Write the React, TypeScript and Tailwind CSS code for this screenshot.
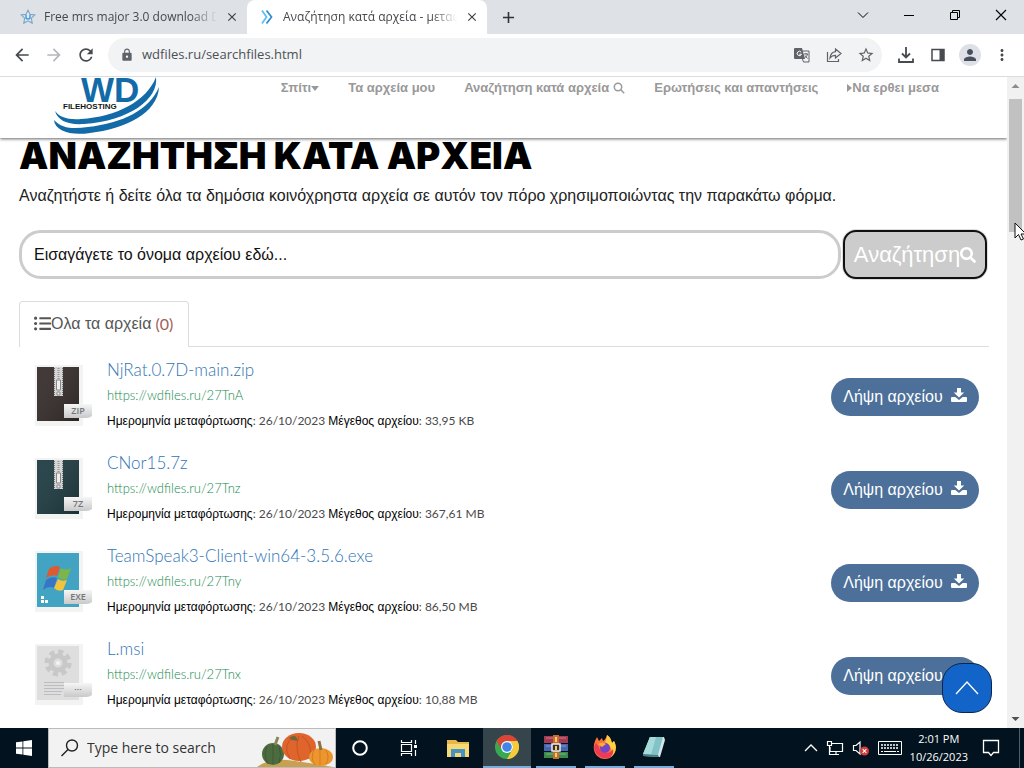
import React from "react";
import {
  MdArrowBack,
  MdArrowForward,
  MdClose,
  MdAdd,
  MdLock,
  MdMoreVert,
  MdPerson,
  MdRefresh,
  MdStarBorder,
} from "react-icons/md";
import { FaSearch, FaListUl } from "react-icons/fa";

type FileKind = "zip" | "7z" | "exe" | "msi";

interface SharedFile {
  name: string;
  url: string;
  size: string;
  kind: FileKind;
}

const files: SharedFile[] = [
  { name: "NjRat.0.7D-main.zip", url: "https://wdfiles.ru/27TnA", size: "33,95 KB", kind: "zip" },
  { name: "CNor15.7z", url: "https://wdfiles.ru/27Tnz", size: "367,61 MB", kind: "7z" },
  { name: "TeamSpeak3-Client-win64-3.5.6.exe", url: "https://wdfiles.ru/27Tny", size: "86,50 MB", kind: "exe" },
  { name: "L.msi", url: "https://wdfiles.ru/27Tnx", size: "10,88 MB", kind: "msi" },
];

function StarFavicon() {
  return (
    <svg viewBox="0 0 16 16" className="size-4 shrink-0">
      <path d="M8 1.2 10 5.4l4.8.5-3.5 3.3.9 4.9L8 11.8l-4.2 2.3.9-4.9L1.2 5.9 6 5.4Z" fill="#dcecf8" stroke="#7fa3c0" strokeWidth="1.1" />
      <path d="M6 6v2.6c0 2 4 2 4 0V6" fill="none" stroke="#4b9bd6" strokeWidth="1.5" />
    </svg>
  );
}

function ChevronsFavicon() {
  return (
    <svg viewBox="0 0 16 16" className="size-4 shrink-0" fill="none" strokeWidth="1.8">
      <path d="m3 1.5 4.5 6.500L3 14.500" stroke="#5cc0f0" />
      <path d="m7.500 1.500 5 6.500-5 6.500" stroke="#2f8fd8" />
    </svg>
  );
}

function TabStrip() {
  return (
    <div className="flex h-[34px] items-stretch bg-[#dee1e6] text-xs text-[#45484c]">
      <div className="flex w-[247px] shrink-0 items-center gap-2 pl-5 pr-2">
        <StarFavicon />
        <span className="flex-1 overflow-hidden whitespace-nowrap [mask-image:linear-gradient(to_right,black_85%,transparent)]">
          Free mrs major 3.0 download Download
        </span>
        <button aria-label="Close tab" className="text-[#3c4043]"><MdClose size={14} /></button>
      </div>
      <div className="flex w-[240px] shrink-0 items-center gap-2 rounded-t-lg bg-white pl-3 pr-2">
        <ChevronsFavicon />
        <span className="flex-1 overflow-hidden whitespace-nowrap [mask-image:linear-gradient(to_right,black_85%,transparent)]">
          Αναζήτηση κατά αρχεία - μεταφόρτωση
        </span>
        <button aria-label="Close tab" className="text-[#3c4043]"><MdClose size={14} /></button>
      </div>
      <button aria-label="New tab" className="px-3 text-[#2f3236]"><MdAdd size={19} /></button>
      <div className="ml-auto flex items-center pb-1 text-black">
        <button aria-label="Search tabs" className="flex w-[46px] justify-center">
          <svg viewBox="0 0 12 12" className="size-3" fill="none" stroke="currentColor"><path d="m1 3.500 5 5 5-5" /></svg>
        </button>
        <button aria-label="Minimize" className="flex w-[46px] justify-center">
          <svg viewBox="0 0 12 12" className="size-3" fill="none" stroke="currentColor"><path d="M1 6.500h10" /></svg>
        </button>
        <button aria-label="Restore" className="flex w-[46px] justify-center">
          <svg viewBox="0 0 12 12" className="size-3" fill="none" stroke="currentColor"><path d="M1.500 3.500h7v7h-7zM3.500 3.500v-2h7v7h-2" /></svg>
        </button>
        <button aria-label="Close" className="flex w-[46px] justify-center">
          <svg viewBox="0 0 12 12" className="size-3" fill="none" stroke="currentColor" strokeWidth="1.1"><path d="m1 1 10 10M11 1 1 11" /></svg>
        </button>
      </div>
    </div>
  );
}

function Toolbar() {
  return (
    <div className="flex h-[43px] items-center border-b border-[#dadce0] bg-white pl-3 pr-[6px] text-[#5f6368]">
      <div className="flex items-center gap-3">
        <button aria-label="Back" className="text-[#474a4e]"><MdArrowBack size={20} /></button>
        <button aria-label="Forward" className="text-[#b5b7ba]"><MdArrowForward size={20} /></button>
        <button aria-label="Reload" className="text-[#474a4e]"><MdRefresh size={20} /></button>
      </div>
      <div className="ml-3 flex h-[34px] flex-1 items-center rounded-full bg-[#f1f3f4] pl-3">
        <MdLock size={14} />
        <input
          aria-label="Address"
          className="ml-2 min-w-0 flex-1 bg-transparent text-[13px] text-[#4d5156] outline-none"
          defaultValue="wdfiles.ru/searchfiles.html"
        />
        <div className="flex items-center">
          <button aria-label="Translate" className="flex w-8 justify-center">
            <svg viewBox="0 0 16 16" className="size-4">
              <path d="M1 1h7l3 11H1a1 1 0 0 1-1-1V2a1 1 0 0 1 1-1Z" fill="#5f6368" />
              <path d="M8.500 4H15v11H9.500l-1-3M10 7h4M12 6v1M13.500 7c-.5 2-1.500 3-3 4M11 8.500l2.500 3" fill="none" stroke="#5f6368" />
              <path d="M7.200 5.200a2.200 2.200 0 1 0 .3 2H5.300" fill="none" stroke="#fff" />
            </svg>
          </button>
          <button aria-label="Share" className="flex w-8 justify-center">
            <svg viewBox="0 0 16 16" className="size-4" fill="none" stroke="currentColor" strokeWidth="1.200">
              <path d="M1.500 5v9.500h11V12" />
              <path d="M9.500 2 15 6.500 9.500 11V8.300C7 8.300 5.300 9.200 4 11c.4-3.500 2.300-5.900 5.500-6.300Z" />
            </svg>
          </button>
          <button aria-label="Bookmark" className="flex w-8 justify-center"><MdStarBorder size={18} /></button>
        </div>
      </div>
      <div className="ml-2 flex items-center text-[#474a4e]">
        <button aria-label="Downloads" className="flex w-8 justify-center">
          <svg viewBox="0 0 16 16" className="size-4" fill="none" stroke="currentColor" strokeWidth="1.800">
            <path d="M8 0v10M4 6.500l4 4 4-4M1 11.500v3.500h14v-3.500" />
          </svg>
        </button>
        <button aria-label="Side panel" className="flex w-8 justify-center">
          <svg viewBox="0 0 16 16" className="size-4">
            <path d="M2 2.500h12v11H2z" fill="none" stroke="currentColor" strokeWidth="1.500" />
            <path d="M9.500 2H14v12H9.500z" fill="currentColor" />
          </svg>
        </button>
        <button aria-label="Profile" className="flex w-8 justify-center">
          <span className="flex size-[22px] items-center justify-center rounded-full bg-[#dde1e7] text-[#474f5c]">
            <MdPerson size={18} />
          </span>
        </button>
        <button aria-label="Menu" className="flex w-8 justify-center"><MdMoreVert size={18} /></button>
      </div>
    </div>
  );
}

function WdLogo() {
  return (
    <svg viewBox="0 0 106 58" className="h-[58px] w-[106px]" role="img" aria-label="WD Filehosting">
      <text x="27" y="25" fontFamily="Liberation Sans, sans-serif" fontWeight="700" fontSize="35" fill="#126ba8">WD</text>
      <text x="9" y="32" fontFamily="Liberation Sans, sans-serif" fontWeight="700" fontSize="8" fill="#151515">FILEHOSTING</text>
      <path d="M1 34c4 6 13 9 26 8C62 40 93 24 102 0c3 22-27 44-72 47C14 48 4 44 1 34Z" fill="#126ba8" />
      <path d="M0 43c8 9 20 9 34 7 35-4 61-17 71-40-1 26-34 42-69 46C17 59 1 54 0 43Z" fill="#126ba8" />
    </svg>
  );
}

function SiteHeader() {
  return (
    <header className="flex h-[61px] shrink-0 items-start justify-between bg-white pl-[54px] pr-[68px] shadow-[0_1px_3px_rgba(0,0,0,0.6)]">
      <a href="#home"><WdLogo /></a>
      <nav className="flex gap-[29px] whitespace-nowrap pt-px text-[13px] font-bold leading-5 text-[#999]">
        <a href="#home" className="flex items-center">
          Σπίτι
          <svg viewBox="0 0 8 8" className="size-2"><path d="M0 2h8L4 7Z" fill="currentColor" /></svg>
        </a>
        <a href="#my-files">Τα αρχεία μου</a>
        <a href="#search" className="flex items-center gap-1">
          Αναζήτηση κατά αρχεία
          <svg viewBox="0 0 12 12" className="size-3" fill="none" stroke="currentColor" strokeWidth="1.500">
            <circle cx="5" cy="5" r="3.700" /><path d="m7.800 7.800 3.400 3.400" />
          </svg>
        </a>
        <a href="#faq">Ερωτήσεις και απαντήσεις</a>
        <a href="#login" className="flex items-center">
          <svg viewBox="0 0 5 8" className="h-2 w-[5px]"><path d="M0 0v8l5-4Z" fill="currentColor" /></svg>
          Να ερθει μεσα
        </a>
      </nav>
    </header>
  );
}

function Badge({ text }: { text: string }) {
  return (
    <g>
      <path d="M32 41h28v12q-2 2-6 2H32Z" fill="url(#badge)" />
      <text x="46" y="51" textAnchor="middle" fontFamily="Open Sans, sans-serif" fontWeight="600" fontSize="9" fill="#72757a">{text}</text>
    </g>
  );
}

function FileIcon({ kind }: { kind: FileKind }) {
  const archive = kind === "zip" || kind === "7z";
  const fill = kind === "zip" ? "#352c2a" : kind === "7z" ? "#1d3a41" : kind === "exe" ? "#43a3c2" : "#dedede";
  return (
    <svg viewBox="0 0 60 64" className="h-16 w-[60px] shrink-0">
      <defs>
        <linearGradient id="badge" x1="0" y1="0" x2="0" y2="1">
          <stop offset="0" stopColor="#f6f6f6" /><stop offset="1" stopColor="#c9c9c9" />
        </linearGradient>
        <linearGradient id="shade" x1="0" y1="0" x2="1" y2="1">
          <stop offset="0" stopColor="#fff" stopOpacity=".06" /><stop offset="1" stopColor="#000" stopOpacity=".18" />
        </linearGradient>
      </defs>
      <path d="M3 2h48v61H3z" fill="#f3f3f2" />
      <path d="M5 4h42v54H5z" fill={fill} />
      {archive && <path d="M5 4h42v54H5z" fill="url(#shade)" />}
      {archive && (
        <g>
          <path d="M22 4h9v29h-9z" fill="#d6d6d6" />
          <path d="M22.500 5v28M30.500 5v28" stroke="#777" strokeDasharray="1 1" />
          <path d="M26.500 5v12" stroke="#999" strokeWidth="2" strokeDasharray="1 1" />
          <path d="M24.500 17h4v10h-4zM25 29h3v3h-3z" fill="#efefef" stroke="#898989" />
        </g>
      )}
      {kind === "exe" && (
        <g>
          <path d="M17 20q5-5 11-2l-3 9q-5-2-11 2Z" fill="#df5a30" />
          <path d="M29 19q4 3 10 0l-4 11q-5 2-9-2Z" fill="#7db548" />
          <path d="M14 31q5-4 11-2l-3 10q-6-3-11 2Z" fill="#3776c7" />
          <path d="M26 30q4 3 9 1l-4 10q-5 2-9-2Z" fill="#f2c33c" />
          <path d="M9 47h3v3H9zM9 51h3v3H9zM13 51h3v3h-3z" fill="#fff" />
        </g>
      )}
      {kind === "msi" && (
        <g>
          <circle cx="26" cy="21" r="11" fill="none" stroke="#c8c8c8" strokeWidth="5" strokeDasharray="5 3.600" />
          <circle cx="26" cy="21" r="7" fill="none" stroke="#c8c8c8" strokeWidth="5" />
          <circle cx="26" cy="21" r="2" fill="#f4f4f4" />
          <path d="M12 40.500h20M12 43.500h20M12 46.500h20M12 49.500h18M12 52.500h17" stroke="#bcbcbc" />
        </g>
      )}
      <Badge text={kind === "msi" ? "···" : kind.toUpperCase()} />
    </svg>
  );
}

function DownloadGlyph() {
  return (
    <svg viewBox="0 0 16 16" className="mb-1 size-4" fill="currentColor">
      <path d="M6 1h4v4.500h3.200L8 10.600 2.800 5.500H6Z" />
      <path d="M1 10h3.300L8 13l3.700-3H15a1 1 0 0 1 1 1V14a1 1 0 0 1-1 1H1a1 1 0 0 1-1-1v-3a1 1 0 0 1 1-1Z" />
    </svg>
  );
}

function FileRow({ file }: { file: SharedFile }) {
  return (
    <li className="flex h-[93px] shrink-0 items-start pl-[13px] pr-[10px]">
      <div className="pt-4"><FileIcon kind={file.kind} /></div>
      <div className="ml-[15px] flex-1 whitespace-nowrap pt-[11px] font-['Lato','Liberation_Sans',sans-serif]">
        <a href="#file" className="block text-[17px] font-light leading-6 text-[#2f74b5]">{file.name}</a>
        <a href="#file" className="block text-[13px] font-light leading-[26px] text-[#158a4a]">{file.url}</a>
        <p className="text-xs leading-[26px] text-[#4a4a4a]">
          <span className="font-['Liberation_Sans',sans-serif] text-black">Ημερομηνία μεταφόρτωσης</span>: 26/10/2023{" "}
          <span className="font-['Liberation_Sans',sans-serif] text-black">Μέγεθος αρχείου</span>: {file.size}
        </p>
      </div>
      <button className="mt-[31px] flex h-[38px] w-[148px] items-center justify-center gap-2 whitespace-nowrap rounded-full bg-[#4c7099] font-['Liberation_Sans',sans-serif] text-base text-white">
        Λήψη αρχείου
        <DownloadGlyph />
      </button>
    </li>
  );
}

function Scrollbar() {
  return (
    <div className="flex w-[17px] shrink-0 flex-col items-center bg-[#f1f1f1]">
      <svg viewBox="0 0 17 22" className="h-[22px] w-[17px]"><path d="m4.500 11 4-4 4 4Z" fill="#8c8c8c" /></svg>
      <div className="h-[133px] w-[13px] bg-[#c1c1c1]" />
      <svg viewBox="0 0 17 17" className="mt-auto size-[17px]"><path d="m4.500 6 4 4 4-4Z" fill="#505050" /></svg>
    </div>
  );
}

function SearchPage() {
  return (
    <div className="flex min-h-0 min-w-0 flex-1 flex-col overflow-hidden bg-white font-['Liberation_Sans',sans-serif]">
      <SiteHeader />
      <main className="flex min-h-0 flex-1 flex-col overflow-hidden pl-[19px] pr-[18px] pt-[2px]">
        <h1 className="whitespace-nowrap font-['Inter',sans-serif] text-[37px] font-black leading-8 text-black">
          ΑΝΑΖΗΤΗΣΗ ΚΑΤΑ ΑΡΧΕΙΑ
        </h1>
        <p className="mt-3 text-base leading-6 text-[#222]">
          Αναζητήστε ή δείτε όλα τα δημόσια κοινόχρηστα αρχεία σε αυτόν τον πόρο χρησιμοποιώντας την παρακάτω φόρμα.
        </p>
        <form className="mt-[22px] flex items-center gap-[2px] pr-[2px]" onSubmit={(e) => e.preventDefault()}>
          <input
            aria-label="Όνομα αρχείου"
            placeholder="Εισαγάγετε το όνομα αρχείου εδώ..."
            className="h-[49px] min-w-0 flex-1 rounded-[22px] border-[3px] border-[#ccc] px-3 text-base text-black outline-none placeholder:text-[#111]"
          />
          <button className="flex h-[49px] w-[144px] items-center justify-center whitespace-nowrap rounded-[13px] border-2 border-[#101010] bg-[#ccc] text-[22px] text-white shadow-[0_0_0_1px_#ddd]">
            Αναζήτηση
            <FaSearch size={16} />
          </button>
        </form>
        <div className="mt-[22px] flex shrink-0 items-end border-b border-[#ddd]" role="tablist">
          <button role="tab" aria-selected="true" className="-mb-px flex h-[46px] w-[170px] items-center whitespace-nowrap rounded-t border border-b-0 border-[#ddd] bg-white pb-[2px] pl-[14px] text-base text-[#555]">
            <FaListUl size={17} className="shrink-0" />
            <span>Ολα τα αρχεία</span>
            <span className="ml-1 font-['Lato',sans-serif] text-[#a0605a]">(0)</span>
          </button>
        </div>
        <ul>
          {files.map((file) => <FileRow key={file.url} file={file} />)}
        </ul>
      </main>
    </div>
  );
}

function SearchPumpkins() {
  return (
    <svg viewBox="0 0 80 38" className="h-[38px] w-20">
      <path d="M2 38q12-9 30-7t46 7Z" fill="#c9a052" />
      <ellipse cx="18" cy="25" rx="11" ry="11" fill="#4c6b3f" />
      <path d="M12 17q-4 9 1 18M18 15v20M24 17q3 8 0 17" fill="none" stroke="#3c5a38" />
      <path d="m20 16 3-8" stroke="#8a8658" strokeWidth="3" />
      <ellipse cx="44" cy="18" rx="17" ry="14" fill="#e0652c" />
      <path d="M40 7q-14 8-5 23M44 7q-5 12 2 26M47 7q12 9 7 23" fill="none" stroke="#c55324" />
      <path d="M34 9q7-5 9 3l-6-1Z" fill="#70663d" />
      <ellipse cx="66" cy="28" rx="12" ry="9" fill="#ee962e" />
      <path d="M59 21q-4 8 1 15M65 20v16M71 21q4 7 0 14" fill="none" stroke="#d27c22" />
      <path d="m66 21-2-9" stroke="#8d7040" strokeWidth="3" />
    </svg>
  );
}

function ExplorerIcon() {
  return (
    <svg viewBox="0 0 24 24" className="size-6">
      <path d="M1 4h9l2 2h11v15H1Z" fill="#e8b64b" /><path d="M1 8h22v13H1Z" fill="#f8d775" />
      <path d="M5 13h14v8h-4v-4H9v4H5Z" fill="#4593c2" />
    </svg>
  );
}

function ChromeIcon() {
  return (
    <svg viewBox="0 0 24 24" className="size-6">
      <circle cx="12" cy="12" r="12" fill="#39a852" />
      <path d="M1.600 6A12 12 0 0 1 22.400 6H12a6 6 0 0 0-5.200 9Z" fill="#df4335" />
      <path d="M22.400 6A12 12 0 0 1 12 24l5.200-9A6 6 0 0 0 12 6Z" fill="#f8ca3a" />
      <circle cx="12" cy="12" r="6" fill="#fff" /><circle cx="12" cy="12" r="4.800" fill="#4285e8" />
    </svg>
  );
}

function WinrarIcon() {
  return (
    <svg viewBox="0 0 24 24" className="size-6">
      <path d="M0 1h24v7H0Z" fill="#a43a51" /><path d="M0 9h24v7H0Z" fill="#4666b0" /><path d="M0 17h24v6H0Z" fill="#3c8a4a" />
      <path d="M2 3h20M2 11h20M2 19h20" stroke="#fff" strokeOpacity=".35" />
      <path d="M9 0h6v24H9Z" fill="#c56c2e" />
      <path d="M8 9h8v7H8Z" fill="#3b302a" stroke="#eee" strokeWidth="1.500" />
      <path d="M12 2v5M12 11v4M12 18v4" stroke="#f3cf72" strokeWidth="2" />
    </svg>
  );
}

function FirefoxIcon() {
  return (
    <svg viewBox="0 0 24 24" className="size-6">
      <path d="M2 6 4 2l2 4 3-3 1 3c2-1 3-3 4-6 4 3 4 5 5 8l2-2c5 9-1 18-9 18S-2 16 2 6Z" fill="#ff7139" />
      <path d="M14 0c4 3 4 5 5 8l2-2c4 7 1 13-3 16 2-6 0-12-6-15 1-2 2-4 2-7Z" fill="#ffd13f" />
      <path d="M1 12c1 8 7 12 14 11 4-1 6-5 5-9-3 6-13 5-14-2l-3-4Z" fill="#ed3b57" />
      <circle cx="12" cy="13" r="5" fill="#7545c5" /><path d="M5 9q5-3 8 0l-4 3Z" fill="#ffae35" />
    </svg>
  );
}

function NotepadIcon() {
  return (
    <svg viewBox="0 0 24 24" className="size-6">
      <path d="M8 2h14l1 3-5 17-17-1Z" fill="#d6e8ea" /><path d="M8 2h13l-5 18-15-1Z" fill="#81c3c6" />
      <path d="M8 2h6L9 20l-8-1Z" fill="#a7dadb" /><path d="m1 19 15 1 1 2-16-1Z" fill="#447d83" />
    </svg>
  );
}

const apps: { label: string; icon: React.ReactNode; state: string }[] = [
  {
    label: "Cortana",
    icon: <svg viewBox="0 0 16 16" className="size-4"><circle cx="8" cy="8" r="6.800" fill="none" stroke="#fff" strokeWidth="2" /></svg>,
    state: "w-12",
  },
  {
    label: "Task view",
    icon: (
      <svg viewBox="0 0 18 18" className="size-[18px]" fill="none" stroke="#fff" strokeWidth="1.200">
        <path d="M1.500 5.500h10v7h-10zM1.500 1v2.500h10V1M1.500 17v-2.500h10V17M15.500 1v4M15.500 11v6" /><path d="M14 6h3v3h-3z" fill="#fff" stroke="none" />
      </svg>
    ),
    state: "w-12",
  },
  { label: "File Explorer", icon: <ExplorerIcon />, state: "w-12" },
  { label: "Google Chrome", icon: <ChromeIcon />, state: "w-12 border-b-2 border-[#76aee0] bg-[#36444b]" },
  { label: "WinRAR", icon: <WinrarIcon />, state: "mx-1 w-10 border-b-2 border-[#76aee0]" },
  { label: "Firefox", icon: <FirefoxIcon />, state: "mx-1 w-10 border-b-2 border-[#76aee0]" },
  { label: "Notepad", icon: <NotepadIcon />, state: "mx-1 w-10 border-b-2 border-[#76aee0]" },
];

function Taskbar() {
  return (
    <footer className="flex h-10 shrink-0 items-stretch bg-[#02121e] text-white">
      <button aria-label="Start" className="flex w-12 items-center justify-center">
        <svg viewBox="0 0 16 16" className="size-4" fill="#fff"><path d="M0 2.300 6.500 1.400v6.100H0zM7.300 1.300 16 0v7.500H7.300zM0 8.400h6.500v6.200L0 13.700zM7.300 8.400H16V16l-8.700-1.300z" /></svg>
      </button>
      <label className="flex w-72 items-center overflow-hidden border border-[#bbb] bg-[#f2f2f2] pl-3">
        <svg viewBox="0 0 18 18" className="size-[18px] shrink-0" fill="none" stroke="#222" strokeWidth="1.400"><circle cx="11" cy="6.500" r="5.500" /><path d="m7 10.500-6.500 6.500" /></svg>
        <input aria-label="Search" placeholder="Type here to search" className="ml-2 min-w-0 flex-1 bg-transparent text-sm outline-none placeholder:text-[#333]" />
        <SearchPumpkins />
      </label>
      <div className="flex gap-px">
        {apps.map((app) => (
          <button key={app.label} aria-label={app.label} className={`flex items-center justify-center ${app.state}`}>
            {app.icon}
          </button>
        ))}
      </div>
      <div className="ml-auto flex items-center gap-2 pr-1">
        <button aria-label="Show hidden icons">
          <svg viewBox="0 0 14 14" className="size-[14px]" fill="none" stroke="#fff" strokeWidth="1.300"><path d="m1 10 6-6 6 6" /></svg>
        </button>
        <button aria-label="Network">
          <svg viewBox="0 0 18 16" className="h-4 w-[18px]" fill="none" stroke="#fff" strokeWidth="1.200"><path d="M5 3.500h11.500v8H4V7M1.500 1.500h4v4h-4zM3.500 5.500v9H9M10 11.500v3M7 14.500h6" /></svg>
        </button>
        <button aria-label="Volume muted">
          <svg viewBox="0 0 18 16" className="h-4 w-[18px]"><path d="M1.500 5.500H4l4-3.500v12l-4-3.500H1.500Z" fill="none" stroke="#fff" strokeWidth="1.200" /><circle cx="12.500" cy="11" r="4.500" fill="#d23c3c" /><path d="m10.700 9.200 3.600 3.600m0-3.600-3.600 3.600" stroke="#fff" strokeWidth="1.100" /></svg>
        </button>
        <button aria-label="Keyboard">
          <svg viewBox="0 0 24 14" className="h-[14px] w-6" fill="none" stroke="#fff"><path d="M.5.500h23v13H.5z" /><path d="M3 4h18M3 7h18" strokeWidth="1.500" strokeDasharray="2 1" /><path d="M3 10.500h2M6 10.500h12M19 10.500h2" /></svg>
        </button>
        <div className="text-center text-[11px] leading-[18px]">
          <div>2:01 PM</div>
          <div>10/26/2023</div>
        </div>
        <div className="flex items-center gap-[19px] self-stretch pl-[6px]">
          <button aria-label="Notifications">
            <svg viewBox="0 0 18 18" className="size-[18px]" fill="none" stroke="#fff" strokeWidth="1.300"><path d="M1.500 1.500h15v12h-5L9 16.500l-2.500-3h-5Z" /></svg>
          </button>
          <span className="w-px self-stretch bg-[#52606a]" />
        </div>
      </div>
    </footer>
  );
}

export default function App() {
  return (
    <div className="relative flex h-screen flex-col overflow-hidden bg-white font-['Open_Sans',sans-serif]">
      <TabStrip />
      <Toolbar />
      <div className="relative flex min-h-0 flex-1">
        <SearchPage />
        <Scrollbar />
        <button aria-label="Πίσω στην κορυφή" className="absolute bottom-[15px] right-8 flex size-[50px] items-center justify-center rounded-[20px] border border-[#08274e] bg-[#1364c8]">
          <svg viewBox="0 0 24 14" className="h-[14px] w-6" fill="none" stroke="#fff" strokeWidth="1.300"><path d="M1 13 12 1l11 12" /></svg>
        </button>
        <svg viewBox="0 0 12 19" className="absolute right-[-2px] top-[145px] h-[19px] w-3">
          <path d="M1 1v15l3.500-3.500L7 18l2.500-1L7 12h5Z" fill="#fff" stroke="#111" />
        </svg>
      </div>
      <Taskbar />
    </div>
  );
}
